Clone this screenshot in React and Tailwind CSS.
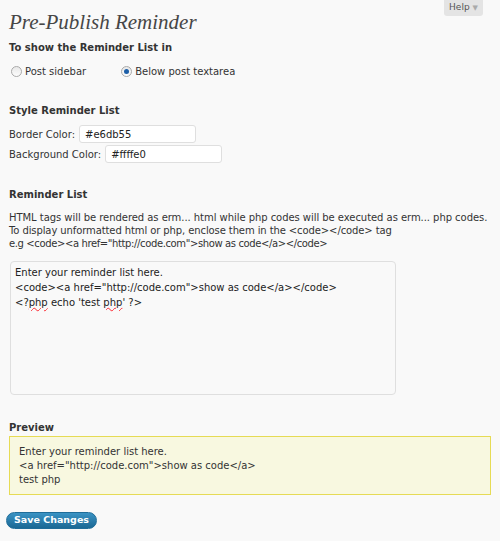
export default function App() {
  const body = { fontFamily: '"DejaVu Sans", Verdana, sans-serif' };
  return (
    <div className="relative min-h-[541px] w-[500px] bg-[#f9f9f9] text-[10px] text-[#333]" style={body}>
      <div className="absolute right-[17px] top-0 flex h-[16px] items-center gap-[3px] rounded-b-[3px] bg-[#e4e4e4] px-[5px] text-[9px] text-[#555]">
        Help <span className="text-[7px] text-[#aaa]">▼</span>
      </div>

      <div className="px-[9px] pt-[9px]">
        <h2
          className="text-[21px] italic leading-[26px] text-[#464646]"
          style={{ fontFamily: '"Liberation Serif", Georgia, serif' }}
        >
          Pre-Publish Reminder
        </h2>

        <h3 className="mt-[6px] text-[10px] font-bold leading-[14px] text-[#333]">To show the Reminder List in</h3>
        <div className="mt-[9px] flex h-[14px] items-center">
          <Radio />
          <span className="ml-[3px]">Post sidebar</span>
          <span className="ml-[33px]" />
          <Radio checked />
          <span className="ml-[3px]">Below post textarea</span>
        </div>

        <h3 className="mt-[26px] text-[10px] font-bold leading-[14px]">Style Reminder List</h3>
        <div className="mt-[7px] flex items-center">
          <span>Border Color:</span>
          <Field value="#e6db55" />
        </div>
        <div className="mt-[2px] flex items-center">
          <span>Background Color:</span>
          <Field value="#ffffe0" />
        </div>

        <h3 className="mt-[25px] text-[10px] font-bold leading-[14px]">Reminder List</h3>
        <p className="mt-[9px] whitespace-nowrap leading-[13px]">
          <span className="tracking-[-0.05px]">
            HTML tags will be rendered as erm... html while php codes will be executed as erm... php codes.
          </span>
          <br />
          <span className="tracking-[-0.1px]">
            To display unformatted html or php, enclose them in the &lt;code&gt;&lt;/code&gt; tag
          </span>
          <br />
          <span className="tracking-[-0.38px]">
            e.g &lt;code&gt;&lt;a href="http://code.com"&gt;show as code&lt;/a&gt;&lt;/code&gt;
          </span>
        </p>

        <div className="ml-[1px] mt-[11px] h-[134px] w-[386px] rounded-[4px] border border-[#dfdfdf] bg-[#f9f9f9] px-[4px] pt-[3px] leading-[15px] text-[#222]">
          <div>Enter your reminder list here.</div>
          <div>&lt;code&gt;&lt;a href="http://code.com"&gt;show as code&lt;/a&gt;&lt;/code&gt;</div>
          <div>
            &lt;?<span className="underline decoration-red-500 decoration-wavy">php</span> echo 'test{" "}
            <span className="underline decoration-red-500 decoration-wavy">php</span>' ?&gt;
          </div>
        </div>

        <h3 className="mt-[26px] text-[10px] font-bold leading-[14px]">Preview</h3>
        <div className="mt-[1px] h-[59px] w-[482px] border border-[#e6db55] bg-[#f8f8e0] px-[9px] pt-[8px] leading-[14px]">
          <div>Enter your reminder list here.</div>
          <div>&lt;a href="http://code.com"&gt;show as code&lt;/a&gt;</div>
          <div>test php</div>
        </div>

        <button
          type="button"
          className="-ml-[3px] mt-[17px] flex h-[17px] w-[91px] items-center justify-center rounded-full border border-[#1f6d99] bg-gradient-to-b from-[#3a93c4] to-[#1b6894] text-[9.5px] font-bold text-white"
        >
          Save Changes
        </button>
      </div>
    </div>
  );
}

function Radio({ checked }) {
  return (
    <span className="ml-[2px] flex h-[11px] w-[11px] items-center justify-center rounded-full border border-[#aaa] bg-gradient-to-b from-[#e8e8e8] to-[#fdfdfd]">
      {checked && <span className="h-[5px] w-[5px] rounded-full bg-[#1d5fa8]" />}
    </span>
  );
}

function Field({ value }) {
  return (
    <span className="ml-[4px] flex h-[18px] w-[117px] items-center rounded-[3px] border border-[#dfdfdf] bg-white px-[5px] text-[#222]">
      {value}
    </span>
  );
}
